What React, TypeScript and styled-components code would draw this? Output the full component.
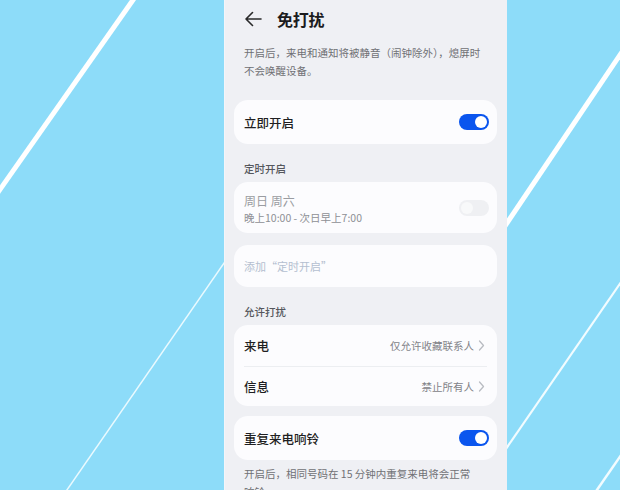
import styled, { createGlobalStyle } from "styled-components";

const GlobalStyle = createGlobalStyle`
  html, body {
    margin: 0;
    padding: 0;
    background: #8ddcf9;
  }
  body {
    font-family: "Noto Sans CJK SC", "Noto Sans", sans-serif;
    -webkit-font-smoothing: antialiased;
  }
`;

const ArrowLeft = () => (
  <svg width="18" height="16" viewBox="0 0 18 16" fill="none">
    <path d="M17 8H2M8.5 1.5L2 8l6.5 6.5" stroke="#2a2a2a" strokeWidth="1.6" strokeLinecap="round" strokeLinejoin="round" />
  </svg>
);

const Chevron = () => (
  <svg width="7" height="11" viewBox="0 0 7 11" fill="none">
    <path d="M1.5 1l4 4.5-4 4.5" stroke="#b9bcc2" strokeWidth="1.3" strokeLinecap="round" strokeLinejoin="round" />
  </svg>
);

const Toggle = ({ on }: { on: boolean }) => (
  <Switch $on={on}>
    <Knob $on={on} />
  </Switch>
);

const App = () => {
  return (
    <>
      <GlobalStyle />
      <Page>
        <Stripes width="620" height="490" viewBox="0 0 620 490">
          <line x1="-20" y1="218" x2="140" y2="-10" stroke="#fff" strokeWidth="5" />
          <line x1="60" y1="500" x2="240" y2="240" stroke="#eafaff" strokeWidth="1.5" />
          <line x1="400" y1="382" x2="628" y2="43" stroke="#fff" strokeWidth="5" />
          <line x1="490" y1="472" x2="628" y2="272" stroke="#f2fcff" strokeWidth="2.2" />
          <line x1="590" y1="500" x2="628" y2="445" stroke="#f2fcff" strokeWidth="2.5" />
        </Stripes>
        <Screen>
          <Header>
            <ArrowLeft />
            <Title>免打扰</Title>
          </Header>
          <Note>开启后，来电和通知将被静音（闹钟除外），熄屏时不会唤醒设备。</Note>

          <Card $top={20}>
            <Row $height={44}>
              <Label>立即开启</Label>
              <Toggle on />
            </Row>
          </Card>

          <SectionTitle>定时开启</SectionTitle>
          <Card>
            <Row $height={51}>
              <Stack>
                <Days>周日 周六</Days>
                <Hours>晚上10:00 - 次日早上7:00</Hours>
              </Stack>
              <Toggle on={false} />
            </Row>
          </Card>

          <Card $top={12}>
            <Row $height={42}>
              <Placeholder>添加“定时开启”</Placeholder>
            </Row>
          </Card>

          <SectionTitle>允许打扰</SectionTitle>
          <Card>
            <Row $height={41}>
              <Label>来电</Label>
              <Value>
                仅允许收藏联系人
                <Chevron />
              </Value>
            </Row>
            <Divider />
            <Row $height={39}>
              <Label>信息</Label>
              <Value>
                禁止所有人
                <Chevron />
              </Value>
            </Row>
          </Card>

          <Card $top={10}>
            <Row $height={44}>
              <Label>重复来电响铃</Label>
              <Toggle on />
            </Row>
          </Card>
          <Note $top={5} $right={22}>开启后，相同号码在 15 分钟内重复来电将会正常响铃。</Note>
        </Screen>
      </Page>
    </>
  );
};

const Page = styled.div`
  position: relative;
  display: flex;
  width: 620px;
  height: 490px;
  padding-left: 224px;
  box-sizing: border-box;
  overflow: hidden;
  background: #8ddcf9;
`;

const Stripes = styled.svg`
  position: absolute;
  inset: 0;
  z-index: 0;
`;

const Screen = styled.div`
  position: relative;
  z-index: 1;
  display: flex;
  flex-direction: column;
  width: 283px;
  height: 490px;
  padding: 0 10px 0 9px;
  box-sizing: border-box;
  background: #eff0f4;
  border-left: 1px solid #f3f5f9;
  overflow: hidden;
`;

const Header = styled.div`
  display: flex;
  align-items: center;
  gap: 15px;
  height: 38px;
  padding-left: 10px;
  flex-shrink: 0;
`;

const Title = styled.div`
  font-size: 16px;
  font-weight: 700;
  color: #1c1c1e;
  letter-spacing: -0.2px;
`;

const Note = styled.div<{ $top?: number; $right?: number }>`
  margin-top: ${(p) => p.$top ?? 6}px;
  padding: 0 ${(p) => p.$right ?? 12}px 0 10px;
  font-size: 10.5px;
  line-height: 18px;
  color: #6f7075;
  flex-shrink: 0;
`;

const Card = styled.div<{ $top?: number }>`
  margin-top: ${(p) => p.$top ?? 0}px;
  background: #fcfcfe;
  border-radius: 14px;
  flex-shrink: 0;
`;

const Row = styled.div<{ $height: number }>`
  display: flex;
  align-items: center;
  justify-content: space-between;
  height: ${(p) => p.$height}px;
  padding: 0 8px 0 10px;
`;

const Label = styled.div`
  font-size: 12.5px;
  font-weight: 500;
  color: #1f1f22;
`;

const SectionTitle = styled.div`
  height: 16px;
  margin: 17px 0 5px;
  padding-left: 10px;
  font-size: 10.5px;
  font-weight: 500;
  line-height: 16px;
  color: #55575c;
  flex-shrink: 0;
`;

const Stack = styled.div`
  display: flex;
  flex-direction: column;
  gap: 1px;
  padding-top: 3px;
`;

const Days = styled.div`
  font-size: 12px;
  line-height: 16px;
  color: #9a9ca1;
`;

const Hours = styled.div`
  font-size: 10.5px;
  line-height: 15px;
  color: #8e9095;
`;

const Placeholder = styled.div`
  font-size: 11px;
  color: #b4bfd0;
`;

const Value = styled.div`
  display: flex;
  align-items: center;
  gap: 4px;
  padding-right: 4px;
  font-size: 10.5px;
  color: #828388;
`;

const Divider = styled.div`
  height: 1px;
  margin: 0 10px;
  background: #eceef1;
`;

const Switch = styled.div<{ $on: boolean }>`
  display: flex;
  align-items: center;
  justify-content: ${(p) => (p.$on ? "flex-end" : "flex-start")};
  width: 30px;
  height: 16px;
  padding: 2px;
  box-sizing: border-box;
  border-radius: 8px;
  background: ${(p) => (p.$on ? "#0a55ee" : "#eff0f3")};
`;

const Knob = styled.div<{ $on: boolean }>`
  width: 12px;
  height: 12px;
  border-radius: 50%;
  background: ${(p) => (p.$on ? "#ffffff" : "#f8f9fa")};
`;

export default App;
